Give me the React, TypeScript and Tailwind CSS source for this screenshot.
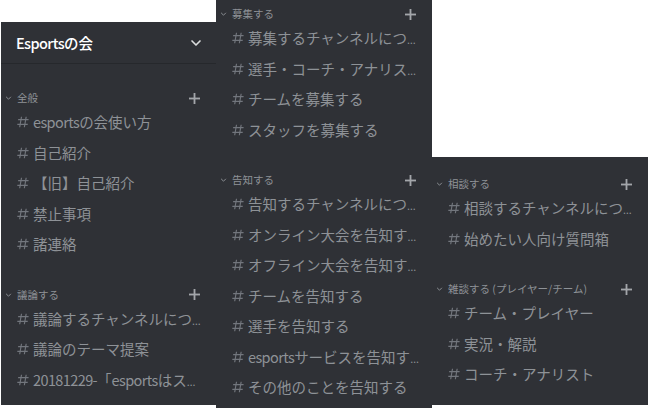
import { ChevronDown } from "lucide-react";

type Block = { name: string; channels: string[] };

type Panel = {
  server?: string;
  className: string;
  blocks: Block[];
};

const panels: Panel[] = [
  {
    server: "Esportsの会",
    className: "ml-[1px] mt-[22px] h-[383px] w-[215px]",
    blocks: [
      {
        name: "全般",
        channels: ["esportsの会使い方", "自己紹介", "【旧】自己紹介", "禁止事項", "諸連絡"],
      },
      {
        name: "議論する",
        channels: [
          "議論するチャンネルについて",
          "議論のテーマ提案",
          "20181229-「esportsはスポーツか」",
        ],
      },
    ],
  },
  {
    className: "h-[408px] w-[216px] pt-[4px]",
    blocks: [
      {
        name: "募集する",
        channels: [
          "募集するチャンネルについて",
          "選手・コーチ・アナリストを募集する",
          "チームを募集する",
          "スタッフを募集する",
        ],
      },
      {
        name: "告知する",
        channels: [
          "告知するチャンネルについて",
          "オンライン大会を告知する",
          "オフライン大会を告知する",
          "チームを告知する",
          "選手を告知する",
          "esportsサービスを告知する",
          "その他のことを告知する",
        ],
      },
    ],
  },
  {
    className: "mt-[157px] h-[248px] w-[216px] pt-[17px]",
    blocks: [
      {
        name: "相談する",
        channels: ["相談するチャンネルについて", "始めたい人向け質問箱"],
      },
      {
        name: "雑談する (プレイヤー/チーム)",
        channels: ["チーム・プレイヤー", "実況・解説", "コーチ・アナリスト"],
      },
    ],
  },
];

// Latin runs are set a little tighter than the CJK around them
function Mixed({ text }: { text: string }) {
  return (
    <>
      {text.split(/([A-Za-z0-9-]+)/).map((part, i) =>
        i % 2 === 1 ? (
          <span key={i} className="tracking-[-0.6px]">
            {part}
          </span>
        ) : (
          part
        )
      )}
    </>
  );
}

// Discord-style channel hash
function HashIcon() {
  return (
    <svg viewBox="0 0 24 24" className="h-[14px] w-[14px] shrink-0 text-[#72767d]" fill="currentColor">
      <path
        fillRule="evenodd"
        d="M5.88657 21C5.57547 21 5.3399 20.7189 5.39427 20.4126L6.00001 17H2.59511C2.28449 17 2.04905 16.7198 2.10259 16.4138L2.27759 15.4138C2.31946 15.1746 2.52722 15 2.77011 15H6.35001L7.41001 9H4.00511C3.69449 9 3.45905 8.71977 3.51259 8.41381L3.68759 7.41381C3.72946 7.17456 3.93722 7 4.18011 7H7.76001L8.39677 3.41262C8.43914 3.17391 8.64664 3 8.88907 3H9.87344C10.1845 3 10.4201 3.28107 10.3657 3.58738L9.76001 7H15.76L16.3968 3.41262C16.4391 3.17391 16.6466 3 16.8891 3H17.8734C18.1845 3 18.4201 3.28107 18.3657 3.58738L17.76 7H21.1649C21.4755 7 21.711 7.28023 21.6574 7.58619L21.4824 8.58619C21.4406 8.82544 21.2328 9 20.9899 9H17.41L16.35 15H19.7549C20.0655 15 20.301 15.2802 20.2474 15.5862L20.0724 16.5862C20.0306 16.8254 19.8228 17 19.5799 17H16L15.3632 20.5874C15.3209 20.8261 15.1134 21 14.8709 21H13.8866C13.5755 21 13.3399 20.7189 13.3943 20.4126L14 17H8.00001L7.36325 20.5874C7.32088 20.8261 7.11337 21 6.87094 21H5.88657ZM9.41045 9L8.35045 15H14.3504L15.4104 9H9.41045Z"
      />
    </svg>
  );
}

function Category({ name }: { name: string }) {
  return (
    <div className="flex h-[19px] items-center pl-[4px] pr-[16px] pt-[1px]">
      <svg viewBox="0 0 8 5" className="h-[4px] w-[7px] shrink-0 text-[#8e9297]" fill="none" stroke="currentColor" strokeWidth="1.2">
        <polyline points="1,1 4,4 7,1" />
      </svg>
      <span className="ml-[5px] flex-1 truncate text-[10.5px] text-[#8e9297]">{name}</span>
      <svg viewBox="0 0 12 12" className="h-[11px] w-[11px] shrink-0 text-[#a3a6aa]" stroke="currentColor" strokeWidth="2">
        <line x1="6" y1="0" x2="6" y2="12" />
        <line x1="0" y1="6" x2="12" y2="6" />
      </svg>
    </div>
  );
}

function Channel({ name }: { name: string }) {
  // outer box sets the ellipsis: Latin font, small size -> narrow baseline dots
  return (
    <div className="flex h-[30.5px] items-center pl-[15px] pr-[11px]">
      <HashIcon />
      <div className="ml-[3px] min-w-0 truncate font-['Noto_Sans',sans-serif] text-[11px] text-[#8e9297]">
        <span className="font-['Noto_Sans_CJK_JP',sans-serif] text-[14.5px]">
          <Mixed text={name} />
        </span>
      </div>
    </div>
  );
}

export default function App() {
  return (
    <div className="flex h-[408px] w-[650px] items-start overflow-hidden bg-white font-['Noto_Sans_CJK_JP','Noto_Sans',sans-serif]">
      {panels.map((panel, i) => (
        <div key={i} className={`flex shrink-0 flex-col bg-[#2f3136] ${panel.className}`}>
          {panel.server && (
            <div className="mb-[24px] flex h-[42px] items-center justify-between border-b border-[#26282c] pl-[15px] pr-[12px]">
              <span className="text-[14.5px] font-medium text-white">
                <Mixed text={panel.server} />
              </span>
              <ChevronDown className="h-[16px] w-[16px] text-[#dcddde]" strokeWidth={2.5} />
            </div>
          )}
          {panel.blocks.map((block, j) => (
            <div key={block.name} className={j > 0 ? "mt-[25px]" : ""}>
              <Category name={block.name} />
              {block.channels.map((ch) => (
                <Channel key={ch} name={ch} />
              ))}
            </div>
          ))}
        </div>
      ))}
    </div>
  );
}
